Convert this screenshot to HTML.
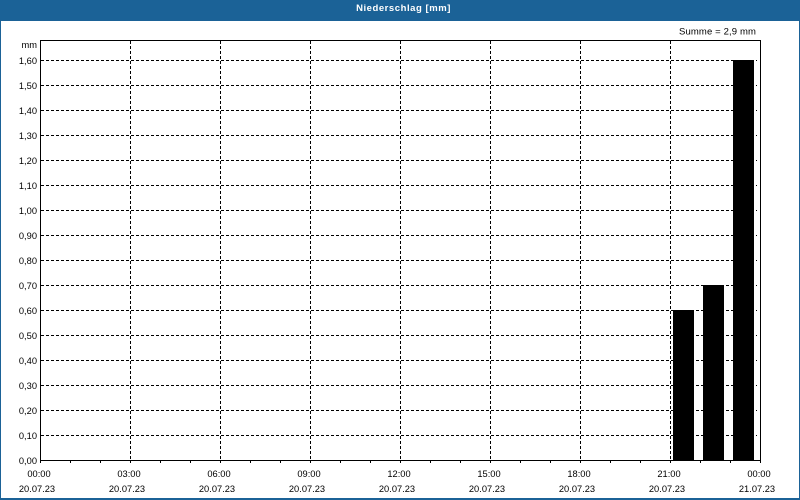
<!DOCTYPE html>
<html><head><meta charset="utf-8"><style>
html,body{margin:0;padding:0;background:#fff;width:800px;height:500px;overflow:hidden}
svg{display:block}
text{font-family:"Liberation Sans",sans-serif;font-size:9.3px;fill:#000}
</style></head><body>
<svg width="800" height="500" viewBox="0 0 800 500" xmlns="http://www.w3.org/2000/svg">
<rect width="800" height="500" fill="#fff"/>
<g fill="#1b6297">
<rect x="0" y="0" width="800" height="21"/>
<rect x="0" y="0" width="1" height="500"/>
<rect x="799" y="0" width="1" height="500"/>
<rect x="0" y="498" width="800" height="2"/>
</g>
<text x="403.5" y="11" text-anchor="middle" style="fill:#fff;font-weight:bold;font-size:9.5px;letter-spacing:.55px">Niederschlag [mm]</text>
<text x="679" y="34.5" style="font-size:9.5px;letter-spacing:.13px">Summe = 2,9 mm</text>
<g stroke="#000" stroke-width="1" stroke-dasharray="3 2" shape-rendering="crispEdges" fill="none">
<path d="M41 60.5H757M41 85.5H757M41 110.5H757M41 135.5H757M41 160.5H757M41 185.5H757M41 210.5H757M41 235.5H757M41 260.5H757M41 285.5H757M41 310.5H757M41 335.5H757M41 360.5H757M41 385.5H757M41 410.5H757M41 435.5H757"/>
<path d="M130.5 41V460M220.5 41V460M310.5 41V460M400.5 41V460M490.5 41V460M580.5 41V460M670.5 41V460"/>
</g>
<g fill="#000">
<rect x="673" y="310" width="21" height="150"/>
<rect x="703" y="285" width="21" height="175"/>
<rect x="733" y="60" width="21" height="400"/>
</g>
<g stroke="#000" stroke-width="1" shape-rendering="crispEdges" fill="none">
<rect x="40.5" y="40.5" width="720" height="420"/>
<path d="M40.5 461V463M70.5 461V463M100.5 461V463M130.5 461V463M160.5 461V463M190.5 461V463M220.5 461V463M250.5 461V463M280.5 461V463M310.5 461V463M340.5 461V463M370.5 461V463M400.5 461V463M430.5 461V463M460.5 461V463M490.5 461V463M520.5 461V463M550.5 461V463M580.5 461V463M610.5 461V463M640.5 461V463M670.5 461V463M700.5 461V463M730.5 461V463M760.5 461V463"/>
</g>
<g text-anchor="end">
<text x="37" y="48">mm</text>
<text x="37" y="64">1,60</text><text x="37" y="89">1,50</text><text x="37" y="114">1,40</text><text x="37" y="139">1,30</text>
<text x="37" y="164">1,20</text><text x="37" y="189">1,10</text><text x="37" y="214">1,00</text><text x="37" y="239">0,90</text>
<text x="37" y="264">0,80</text><text x="37" y="289">0,70</text><text x="37" y="314">0,60</text><text x="37" y="339">0,50</text>
<text x="37" y="364">0,40</text><text x="37" y="389">0,30</text><text x="37" y="414">0,20</text><text x="37" y="439">0,10</text>
<text x="37" y="464">0,00</text>
</g>
<g text-anchor="middle">
<text x="39" y="477">00:00</text><text x="129" y="477">03:00</text><text x="219" y="477">06:00</text><text x="309" y="477">09:00</text><text x="399" y="477">12:00</text><text x="489" y="477">15:00</text><text x="579" y="477">18:00</text><text x="669" y="477">21:00</text><text x="759" y="477">00:00</text>
<text x="37" y="492">20.07.23</text><text x="127" y="492">20.07.23</text><text x="217" y="492">20.07.23</text><text x="307" y="492">20.07.23</text><text x="397" y="492">20.07.23</text><text x="487" y="492">20.07.23</text><text x="577" y="492">20.07.23</text><text x="667" y="492">20.07.23</text><text x="757" y="492">21.07.23</text>
</g>
</svg>
</body></html>
